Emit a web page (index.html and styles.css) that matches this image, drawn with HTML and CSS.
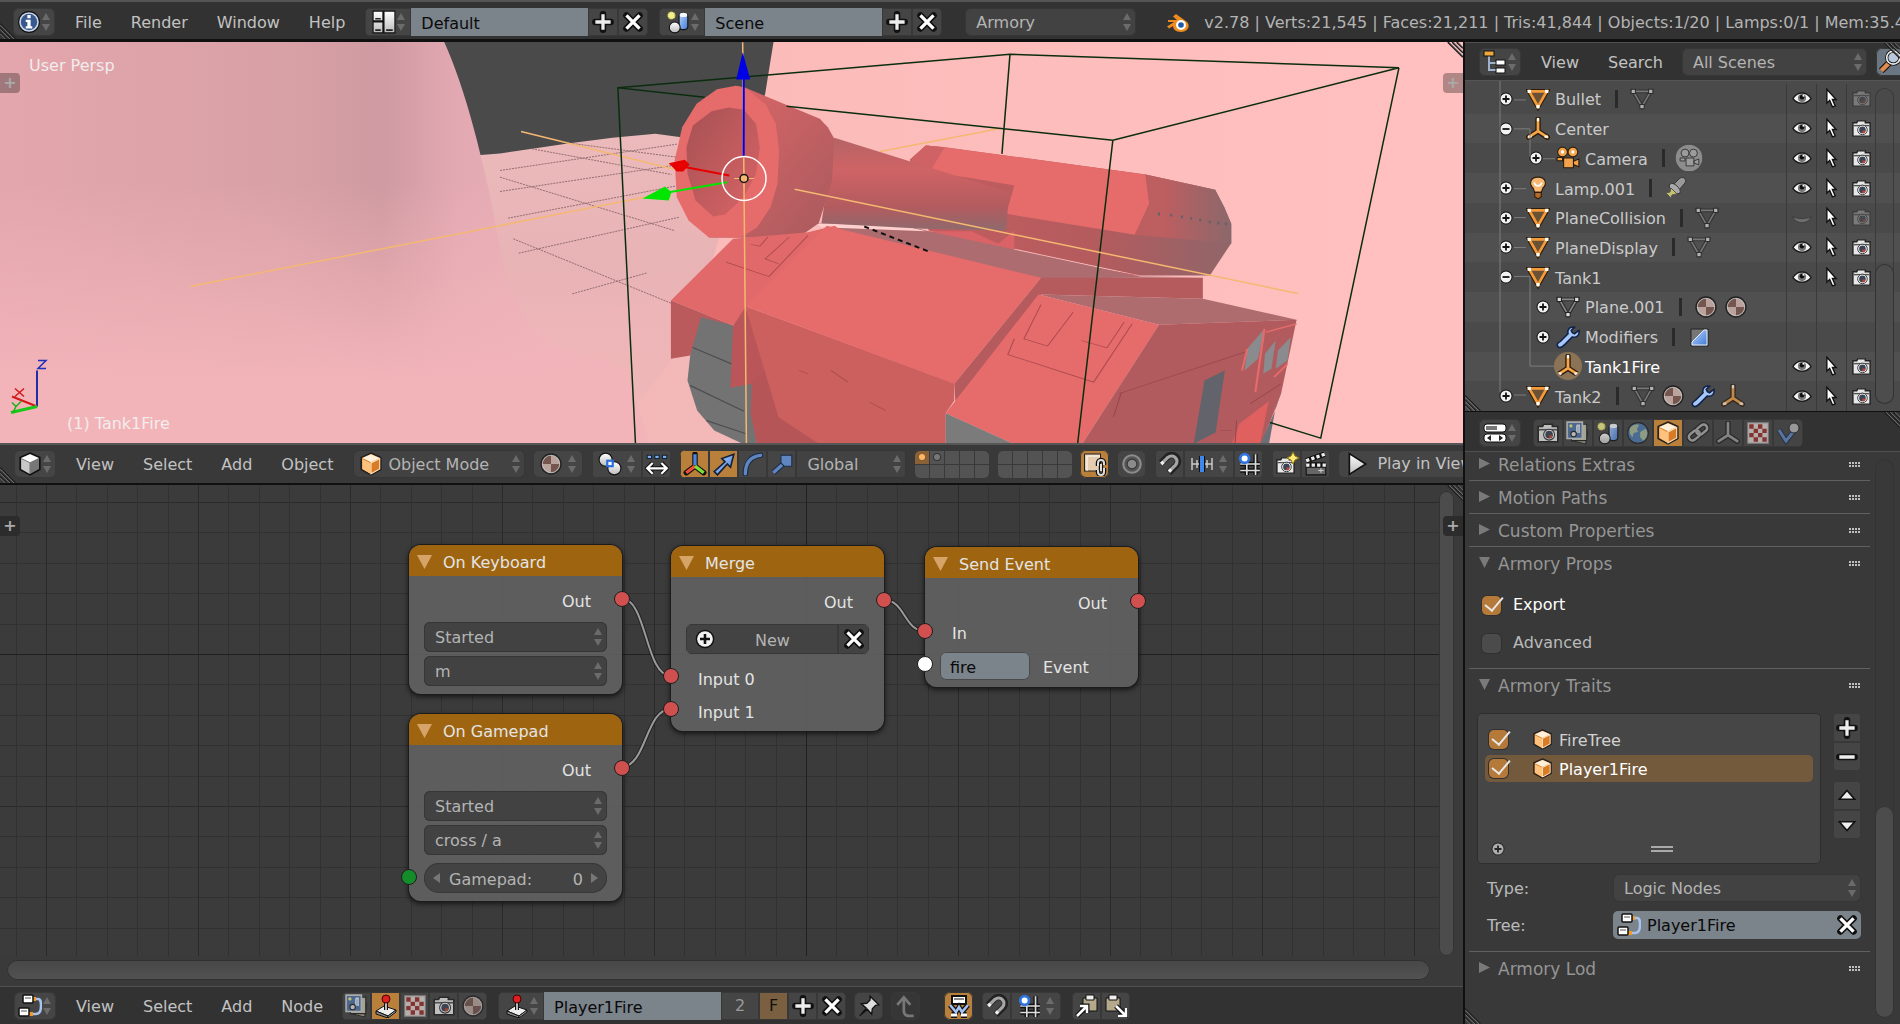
FILE: index.html
```html
<!DOCTYPE html>
<html lang="en">
<head>
<meta charset="utf-8">
<title>Blender</title>
<link rel="stylesheet" href="styles.css">
</head>
<body>
<svg class="defs" aria-hidden="true">
  <defs>
    <linearGradient id="gOrange" x1="0" y1="0" x2="0" y2="1"><stop offset="0" stop-color="#ffd9a8"/><stop offset="1" stop-color="#e8882a"/></linearGradient>
    <linearGradient id="gWhite" x1="0" y1="0" x2="0" y2="1"><stop offset="0" stop-color="#fff"/><stop offset="1" stop-color="#bbb"/></linearGradient>
    <linearGradient id="gBlue" x1="0" y1="0" x2="1" y2="1"><stop offset="0" stop-color="#bcd6ff"/><stop offset="1" stop-color="#3f7ad6"/></linearGradient>
    <symbol id="ud" viewBox="0 0 10 20"><path d="M5 1 9 8H1zM5 19 9 12H1z" fill="#6b6b6b"/></symbol>
    <symbol id="grip" viewBox="0 0 18 18"><path d="M1 0 18 17M6 0 18 12M11 0 18 7" stroke="#1c1c1c" stroke-width="2"/><path d="M2 0 18 16M7 0 18 11M12 0 18 6" stroke="#8a8a8a" stroke-width="1"/></symbol>
    <symbol id="plus" viewBox="0 0 22 22"><path d="M11 4v14M4 11h14" stroke="#111" stroke-width="6" stroke-linecap="round"/><path d="M11 4v14M4 11h14" stroke="#eee" stroke-width="3"/></symbol>
    <symbol id="minus" viewBox="0 0 22 22"><path d="M4 11h14" stroke="#111" stroke-width="6" stroke-linecap="round"/><path d="M4 11h14" stroke="#eee" stroke-width="3"/></symbol>
    <symbol id="cross" viewBox="0 0 22 22"><path d="M5 5 17 17M17 5 5 17" stroke="#111" stroke-width="6" stroke-linecap="round"/><path d="M5 5 17 17M17 5 5 17" stroke="#fff" stroke-width="3"/></symbol>
    <symbol id="info" viewBox="0 0 22 22"><circle cx="11" cy="11" r="10" fill="#111"/><circle cx="11" cy="11" r="9" fill="#c9d6ea"/><circle cx="11" cy="11" r="7.500" fill="#38588f"/><path d="M9.500 4.500h3v3h-3zM8 9h4.500v6H14v2H8v-2h1.500v-4H8z" fill="#fff"/></symbol>
    <symbol id="screen" viewBox="0 0 22 22"><path d="M1 1h9v9H1zM1 11h9v10H1zM11 1h10v20H11z" fill="url(#gWhite)" stroke="#111"/><path d="M3 8h5M3 18.500h5M13 18.500h6" stroke="#222" stroke-width="1.500"/></symbol>
    <symbol id="scene" viewBox="0 0 22 22"><rect x="12" y="3" width="8" height="15" rx="3" fill="url(#gBlue)" stroke="#111"/><ellipse cx="16" cy="4.500" rx="3.500" ry="2" fill="#f4f8ff"/><circle cx="8" cy="16" r="5" fill="url(#gWhite)" stroke="#111"/><circle cx="5" cy="5" r="3.500" fill="#f3ef8e" stroke="#8a8630" stroke-dasharray="1.500 1"/></symbol>
    <symbol id="blender" viewBox="0 0 24 22"><path d="M2 9h9L7 5.500 10 3l11 8c4 5 0 10-6 10-5 0-8-3-8-6l-4 2.500-2-2L8 11H2z" fill="#ef8a1e"/><circle cx="15" cy="14" r="5" fill="#fff"/><circle cx="15" cy="14" r="2.800" fill="#1d5aa6"/></symbol>
    <symbol id="outliner" viewBox="0 0 24 24"><path d="M6 5v15h8M6 13h8" stroke="#9fb4cc" stroke-width="2" fill="none"/><rect x="1" y="1" width="10" height="5" fill="#f0a83c" stroke="#111"/><rect x="13" y="10" width="9" height="5" fill="#fff" stroke="#111"/><rect x="13" y="18" width="9" height="5" fill="#fff" stroke="#111"/></symbol>
    <symbol id="search" viewBox="0 0 22 22"><path d="M3 19 10 12" stroke="#111" stroke-width="6"/><path d="M3 19 10 12" stroke="#e08b50" stroke-width="4"/><circle cx="14" cy="7" r="6" fill="#b9c9db" stroke="#111" stroke-width="3"/><circle cx="14" cy="7" r="6" fill="none" stroke="#eee" stroke-width="1.500"/></symbol>
    <symbol id="cubeW" viewBox="0 0 22 22"><path d="M11 1 20 5v11l-9 5-9-5V5z" fill="#777" stroke="#111" stroke-width="1.500"/><path d="M11 2 19 5.500 11 9.500 3 5.500z" fill="#fff"/><path d="M3 6.500 10.500 10v10L3 15.500z" fill="#c8c8c8"/></symbol>
    <symbol id="cubeO" viewBox="0 0 22 22"><path d="M11 1 20 5v11l-9 5-9-5V5z" fill="#d97b24" stroke="#222" stroke-width="1.500"/><path d="M11 2 19 5.500 11 9.500 3 5.500z" fill="#fff0dc"/><path d="M3 6.500 10.500 10v10L3 15.500z" fill="#ffc27d"/><path d="M19 6v9.500L11 20V10z" fill="none" stroke="#ffe1bb"/></symbol>
    <symbol id="mat" viewBox="0 0 22 22"><circle cx="11" cy="11" r="9" fill="#b9a39c" stroke="#222" stroke-width="1.500"/><path d="M11 11V3a8 8 0 0 0-8 8zM11 11v8a8 8 0 0 0 8-8z" fill="#75564f"/><circle cx="11" cy="11" r="8" fill="none" stroke="#ddd" opacity=".6"/></symbol>
    <symbol id="pivot" viewBox="0 0 22 22"><circle cx="7" cy="7" r="6" fill="url(#gWhite)" stroke="#111"/><circle cx="15" cy="15" r="6" fill="url(#gWhite)" stroke="#111"/><rect x="8.500" y="8" width="5" height="5" fill="#fff" stroke="#2a6fdb" stroke-width="2"/></symbol>
    <symbol id="manip" viewBox="0 0 22 22"><path d="M2 3h4v3H2zM9 3h4v3H9zM16 3h4v3h-4z" fill="#79aef2" stroke="#123"/><path d="M3 15h16M7 10 2 15l5 5M15 10l5 5-5 5" stroke="#111" stroke-width="4" fill="none"/><path d="M3 15h16M7 10 2 15l5 5M15 10l5 5-5 5" stroke="#fff" stroke-width="2" fill="none"/></symbol>
    <symbol id="axes" viewBox="0 0 22 22"><path d="M11 2v10M11 13 3 19M11 13l8 6" stroke="#111" stroke-width="5" stroke-linecap="round"/><path d="M11 2v10" stroke="#4a87e8" stroke-width="3"/><path d="M11 13 3 19" stroke="#f0503a" stroke-width="3"/><path d="m11 13 8 6" stroke="#7de03a" stroke-width="3"/></symbol>
    <symbol id="arrow" viewBox="0 0 22 22"><path d="M2 18 12 9 9 6l11-4-3 12-3-3L5 21z" fill="url(#gBlue)" stroke="#14213a" stroke-width="1.500"/></symbol>
    <symbol id="arc" viewBox="0 0 22 22"><path d="M4 20C4 10 9 4 18 3" stroke="#1d2c45" stroke-width="5" fill="none" stroke-linecap="round"/><path d="M4 20C4 10 9 4 18 3" stroke="#5f86bf" stroke-width="3" fill="none" stroke-linecap="round"/></symbol>
    <symbol id="scale" viewBox="0 0 22 22"><path d="M3 19 12 11" stroke="#1d2c45" stroke-width="5"/><path d="M3 19 12 11" stroke="#5f86bf" stroke-width="3"/><path d="M10 3h10v10h-7l-3-3z" fill="#5f86bf" stroke="#1d2c45"/></symbol>
    <symbol id="lock" viewBox="0 0 24 24"><rect x="1.500" y="2" width="16" height="17" fill="#e6cdb0" stroke="#222"/><path d="M4 19V4h13" stroke="#fff" fill="none"/><path d="M15 14v-3a3 3 0 0 1 6 0v2M21 16v4a3 3 0 0 1-6 0v-2M18 12v7" stroke="#111" stroke-width="4.500" fill="none"/><path d="M15 14v-3a3 3 0 0 1 6 0v2M21 16v4a3 3 0 0 1-6 0v-2M18 12v7" stroke="#ddd" stroke-width="2" fill="none"/></symbol>
    <symbol id="prop" viewBox="0 0 22 22"><circle cx="11" cy="11" r="8" fill="#555" stroke="#8a8a8a" stroke-width="2"/><circle cx="11" cy="11" r="4.500" fill="#8a8a8a" stroke="#333"/></symbol>
    <symbol id="magnet" viewBox="0 0 22 22"><path d="M3 10 9 4c6-4 12 3 8 8l-7 7" stroke="#222" stroke-width="6" fill="none"/><path d="M3 11 9 5c5-4 11 2 7 7l-6 6" stroke="#a5a5a5" stroke-width="3" fill="none"/><path d="m3 11 2-2M10 18l2-2" stroke="#eee" stroke-width="3"/></symbol>
    <symbol id="inc" viewBox="0 0 24 22"><path d="M2 5v12M7 7v8M17 7v8M22 5v12M2 11h20" stroke="#c8c8c8" stroke-width="1.500"/><path d="M12 3v16" stroke="#111" stroke-width="6"/><path d="M12 3v16" stroke="#3f86ee" stroke-width="4"/></symbol>
    <symbol id="sgrid" viewBox="0 0 22 22"><path d="M9 8v13M17 2v19M3 11h18M3 17h18" stroke="#111" stroke-width="4"/><path d="M9 8v13M17 2v19M3 11h18M3 17h18" stroke="#ddd" stroke-width="1.500"/><circle cx="7" cy="6" r="4" fill="#fff" stroke="#2f74e0" stroke-width="2.500"/></symbol>
    <symbol id="photo" viewBox="0 0 22 22"><path d="M2 5h4l1-2h8v2h5v14H2z" fill="#e8e8e8" stroke="#222" stroke-width="1.500"/><path d="M2.500 8h17" stroke="#555" stroke-width="1.500"/><circle cx="12" cy="12.500" r="5" fill="#fff" stroke="#333"/><circle cx="12" cy="12.500" r="3.500" fill="#3a4457"/><path d="M12 13h3a3 3 0 0 1-3 3z" fill="#c8402c"/></symbol>
    <symbol id="photoStar" viewBox="0 0 24 24"><use href="#photo" y="3" width="21" height="21"/><path d="m18 0 2 4 4 2-4 2-2 4-2-4-4-2 4-2z" fill="#ffe873" stroke="#8f7a10"/></symbol>
    <symbol id="clapper" viewBox="0 0 22 22"><path d="M2 12h18v9H2z" fill="#666" stroke="#111"/><path d="M2 8 19 2M2 12h18" stroke="#111" stroke-width="5"/><path d="M2 8 19 2" stroke="#eee" stroke-width="3" stroke-dasharray="3 2"/><path d="M2 12h18" stroke="#eee" stroke-width="3" stroke-dasharray="3 2"/><path d="M13 17h5M15.500 15v4" stroke="#ccc"/></symbol>
    <symbol id="play" viewBox="0 0 22 22"><path d="M4 1.500 19 11 4 20.500z" fill="url(#gWhite)" stroke="#111" stroke-width="1.500"/></symbol>
    <symbol id="meshO" viewBox="0 0 22 22"><path d="M3 4h16l-8 14z" stroke="#2a1c0c" stroke-width="4.500" fill="none"/><path d="M3 4h16l-8 14z" stroke="#f39a3a" stroke-width="2.500" fill="#6a5034"/><path d="M1.500 2.500h3v3h-3zM17.500 2.500h3v3h-3zM9.500 16.500h3v3h-3z" fill="#fff"/></symbol>
    <symbol id="meshG" viewBox="0 0 22 22"><path d="M3 4h16l-8 14z" stroke="#2a2a2a" stroke-width="3.500" fill="none"/><path d="M3 4h16l-8 14z" stroke="#8a8a8a" stroke-width="1.500" fill="none"/><path d="M1 2h4v4H1zM17 2h4v4h-4zM9 16h4v4H9z" fill="#ddd" stroke="#222"/></symbol>
    <symbol id="empty" viewBox="0 0 22 22"><path d="M11 2v11M11 13 2.500 18.500M11 13l8.500 5.500" stroke="#2a1c0c" stroke-width="5" stroke-linecap="round"/><path d="M11 2v11M11 13 2.500 18.500M11 13l8.500 5.500" stroke="#f7a548" stroke-width="2.500" stroke-linecap="round"/><path d="M10 1h2v3h-2zM2 17h3v2H2zM17 17h3v2h-3z" fill="#fff"/></symbol>
    <symbol id="emptyG" viewBox="0 0 22 22"><path d="M11 2v11M11 13 2.500 18.500M11 13l8.500 5.500" stroke="#222" stroke-width="5" stroke-linecap="round"/><path d="M11 2v11M11 13 2.500 18.500M11 13l8.500 5.500" stroke="#999" stroke-width="2.500" stroke-linecap="round"/></symbol>
    <symbol id="movie" viewBox="0 0 22 22"><g fill="#f3a34c" stroke="#2a1c0c"><circle cx="6" cy="5.500" r="4.500"/><circle cx="15.500" cy="5.500" r="4.500"/><path d="M1 10.500h5v3H1zM7 11h9v9H7zM16 14l5-2v7l-5-2z"/></g><circle cx="6" cy="5.500" r="1.500" fill="#fff"/><circle cx="15.500" cy="5.500" r="1.500" fill="#fff"/></symbol>
    <symbol id="movieG" viewBox="0 0 28 28"><circle cx="14" cy="14" r="13.500" fill="#8c8c8c"/><g fill="#9c9c9c" stroke="#3a3a3a"><circle cx="10" cy="9" r="4"/><circle cx="18.500" cy="9" r="4"/><path d="M5 14h5v3H5zM11 14h8v8h-8zM19 17l5-2v6l-5-2z"/></g></symbol>
    <symbol id="bulb" viewBox="0 0 22 22"><path d="M11 1c8 0 8 7 4.500 10L14 15H8l-1.500-4C3 8 3 1 11 1z" fill="#f8b673" stroke="#2a1c0c"/><path d="M7.500 6c1 4 6 4 7 0" stroke="#fff" stroke-width="1.500" fill="none"/><path d="M8 15h6v4l-3 2-3-2z" fill="#b56a27" stroke="#2a1c0c"/></symbol>
    <symbol id="sun" viewBox="0 0 24 24"><path d="m9 9 7-7c4-2 7 2 5 5l-6 7z" fill="#999" stroke="#333"/><path d="M6 8c3-3 12 5 10 9l-3 1-8-7z" fill="#aaa" stroke="#333"/><path d="m7 12 6 6-5 1-1 3-5-5 4-1z" fill="#c4c26a" stroke="#555"/></symbol>
    <symbol id="wrench" viewBox="0 0 22 22"><path d="M2 20c-2-2 0-4 2-5l7-7c-1-4 2-7 6-6l-3 3 1 2 2 1 4-3c1 4-2 7-6 6l-7 7c-2 2-4 4-6 2z" fill="#a9c8fa" stroke="#12244a" stroke-width="1.500"/></symbol>
    <symbol id="bevel" viewBox="0 0 24 24"><path d="M4 4h17v17H4z" fill="#777" stroke="#222"/><path d="M5 20V17L17 5h3v15z" fill="url(#gBlue)" stroke="#e6efff" stroke-width="1"/></symbol>
    <symbol id="eye" viewBox="0 0 22 16"><path d="M1 8c5-8 15-8 20 0-5 7-15 7-20 0z" fill="#f5f5f5" stroke="#1c1c1c" stroke-width="1.500"/><circle cx="11" cy="7.500" r="4.500" fill="#777"/><circle cx="11" cy="6.500" r="2.500" fill="#111"/><circle cx="12.500" cy="5" r="1" fill="#fff"/></symbol>
    <symbol id="eyeOff" viewBox="0 0 22 16"><path d="M1 7c6 3 14 3 20 0-3 9-17 9-20 0z" fill="#6e6e6e" stroke="#3c3c3c"/></symbol>
    <symbol id="cursor" viewBox="0 0 14 22"><path d="M2 1v15l3-3 3 7 3-1-3-7h4z" fill="#fff" stroke="#111" stroke-width="1.500"/></symbol>
    <symbol id="expand" viewBox="0 0 14 14"><circle cx="7" cy="7" r="6.500" fill="#111"/><circle cx="7" cy="7" r="5.500" fill="#f2f2f2"/><path d="M7 3.500v7M3.500 7h7" stroke="#111" stroke-width="1.800"/></symbol>
    <symbol id="collapse" viewBox="0 0 14 14"><circle cx="7" cy="7" r="6.500" fill="#111"/><circle cx="7" cy="7" r="5.500" fill="#f2f2f2"/><path d="M3.500 7h7" stroke="#111" stroke-width="1.800"/></symbol>
    <symbol id="props" viewBox="0 0 24 22"><rect x="1" y="2" width="22" height="8" rx="3" fill="#fff" stroke="#111"/><rect x="3" y="4" width="11" height="4" fill="#777"/><rect x="1" y="12" width="22" height="8" rx="3" fill="#fff" stroke="#111"/><path d="m4 16 4-3v6zM20 16l-4-3v6z" fill="#222"/></symbol>
    <symbol id="layers" viewBox="0 0 22 22"><path d="m8 6 12 3-2 12L5 18z" fill="#aaa48c" stroke="#222"/><path d="M5 3h14v15H5z" fill="#c5c5b0" stroke="#222"/><path d="M1 1h14v15H1z" fill="#4f74a8" stroke="#ccc" stroke-width="1.500"/><path d="M10 4v7M10 4h2v7" stroke="#dfe9f7" stroke-width="1.500" fill="none"/><circle cx="7" cy="12" r="2.500" fill="#ddd" stroke="#222"/><circle cx="4.500" cy="4.500" r="1.500" fill="#eeea80"/></symbol>
    <symbol id="world" viewBox="0 0 22 22"><circle cx="11" cy="11" r="9.500" fill="#4c78ad" stroke="#222"/><path d="M4 6c3-4 8-3 8-2l-2 3 1 3-4 1-1 4c-3-3-3-6-2-9zM13 10l5-3c3 4 1 9-2 11l-3-3z" fill="#a9b894"/></symbol>
    <symbol id="chain" viewBox="0 0 24 22"><g fill="none" stroke="#222" stroke-width="5"><rect x="2" y="10" width="12" height="7" rx="3.500" transform="rotate(-38 8 13)"/><rect x="10" y="4" width="12" height="7" rx="3.500" transform="rotate(-38 16 8)"/></g><g fill="none" stroke="#aaa" stroke-width="2.500"><rect x="2" y="10" width="12" height="7" rx="3.500" transform="rotate(-38 8 13)"/><rect x="10" y="4" width="12" height="7" rx="3.500" transform="rotate(-38 16 8)"/></g></symbol>
    <symbol id="checker" viewBox="0 0 22 22"><path d="M1.500 1.500h19v19h-19z" fill="#ddd4d0" stroke="#888"/><path d="M3 3h4v4H3zM11 3h4v4h-4zM7 7h4v4H7zM15 7h4v4h-4zM3 11h4v4H3zM11 11h4v4h-4zM7 15h4v4H7zM15 15h4v4h-4z" fill="#9a2e2e"/></symbol>
    <symbol id="physics" viewBox="0 0 24 22"><path d="m3 8 7 11 8-10" stroke="#1d2c45" stroke-width="5" fill="none"/><path d="m3 8 7 11 8-10" stroke="#5f86bf" stroke-width="3" fill="none"/><circle cx="18" cy="6" r="5" fill="#b5b5b5" stroke="#222"/></symbol>
    <symbol id="nodes" viewBox="0 0 24 24"><path d="M15 5h5c3 0 3 3 3 7 0 6-2 8-5 8h-6" stroke="#a7c4ee" stroke-width="2.500" fill="none"/><path d="M14 3h4v4h-4zM11 18h4v4h-4z" fill="#f09a2a"/><rect x="5" y="1" width="10" height="8" rx="1" fill="#fff" stroke="#111" stroke-width="1.500"/><rect x="1" y="14" width="10" height="8" rx="1" fill="#fff" stroke="#111" stroke-width="1.500"/><path d="M7 4h6M3 17h6" stroke="#555"/></symbol>
    <symbol id="joy" viewBox="0 0 24 24"><path d="m2 17 8-5 12 4-8 6z" fill="#eee" stroke="#111"/><path d="m2 17 12 5v2L2 20z" fill="#888" stroke="#111"/><path d="m14 22 8-6v2l-8 6z" fill="#aaa" stroke="#111"/><path d="M12 16V7" stroke="#111" stroke-width="4"/><path d="M12 16V7" stroke="#bbb" stroke-width="2"/><circle cx="12" cy="5" r="4" fill="#e02020" stroke="#400"/></symbol>
    <symbol id="pin" viewBox="0 0 22 22"><path d="m12 2 8 8-3 .5-3 3-.5 5-4-4.500-7 6 6-7-4.500-4 5-.5 3-3z" fill="#ddd" stroke="#111" stroke-width="1.200"/></symbol>
    <symbol id="up" viewBox="0 0 22 22"><path d="M18 20h-5c-3 0-4-2-4-5V4M3 10l6-7 6 7" stroke="#777" stroke-width="2.500" fill="none"/></symbol>
    <symbol id="backdrop" viewBox="0 0 24 24"><path d="M5 2h14v8H5z" fill="#fff" stroke="#111" stroke-width="2"/><path d="M7 5h10" stroke="#888" stroke-width="2"/><path d="m3 11 6 7 3-5 3 5 6-7M4 22h6M14 22h6M7 18v4M17 18v4" stroke="#111" stroke-width="5" fill="none"/><path d="m3 11 6 7 3-5 3 5 6-7" stroke="#a5c4f5" stroke-width="2.500" fill="none"/><path d="M4 21h6M14 21h6" stroke="#fff" stroke-width="3"/></symbol>
    <symbol id="copy" viewBox="0 0 24 24"><path d="M8 4h14v13H8z" fill="#b5a98c" stroke="#111"/><path d="M11 1h8v5h-8z" fill="#eee" stroke="#111"/><path d="M2 22 11 13M5 12h7v7" stroke="#111" stroke-width="5" fill="none"/><path d="M2 22 11 13M5 12h7v7" stroke="#fff" stroke-width="2.500" fill="none"/></symbol>
    <symbol id="paste" viewBox="0 0 24 24"><path d="M2 4h14v13H2z" fill="#b5a98c" stroke="#111"/><path d="M5 1h8v5H5z" fill="#eee" stroke="#111"/><path d="m12 12 9 9M22 14v8h-8" stroke="#111" stroke-width="5" fill="none"/><path d="m12 12 9 9M22 14v8h-8" stroke="#fff" stroke-width="2.500" fill="none"/></symbol>
  </defs>
</svg>

<header class="bar bar-top">
  <svg class="corner corner-bl"><use href="#grip"/></svg>
  <button class="btn pick" aria-label="Editor type"><svg class="ic"><use href="#info"/></svg><svg class="ud"><use href="#ud"/></svg></button>
  <nav class="menus"><button>File</button><button>Render</button><button>Window</button><button>Help</button></nav>
  <div class="group">
    <button class="btn pick" aria-label="Browse screens"><svg class="ic"><use href="#screen"/></svg><svg class="ud"><use href="#ud"/></svg></button>
    <input class="field" value="Default" aria-label="Screen">
    <button class="btn" aria-label="Add screen"><svg class="ic"><use href="#plus"/></svg></button>
    <button class="btn" aria-label="Delete screen"><svg class="ic"><use href="#cross"/></svg></button>
  </div>
  <div class="group">
    <button class="btn pick" aria-label="Browse scenes"><svg class="ic"><use href="#scene"/></svg><svg class="ud"><use href="#ud"/></svg></button>
    <input class="field" value="Scene" aria-label="Scene">
    <button class="btn" aria-label="Add scene"><svg class="ic"><use href="#plus"/></svg></button>
    <button class="btn" aria-label="Delete scene"><svg class="ic"><use href="#cross"/></svg></button>
  </div>
  <span class="sel sel-engine"><select aria-label="Render engine"><option>Armory</option></select><svg class="ud"><use href="#ud"/></svg></span>
  <svg class="ic logo"><use href="#blender"/></svg>
  <span class="status">v2.78 | Verts:21,545 | Faces:21,211 | Tris:41,844 | Objects:1/20 | Lamps:0/1 | Mem:35.49M</span>
</header>

<main class="work">
  <div class="left">
    <section class="view3d" aria-label="3D view">
      <svg class="scene" viewBox="0 41 1463 402" preserveAspectRatio="xMidYMid slice">
        <defs>
          <linearGradient id="hill" x1="0" x2="1" y1="0" y2="0"><stop offset="0" stop-color="#e3a6ac"/><stop offset=".45" stop-color="#d8a1a6"/><stop offset=".6" stop-color="#cf9aa1"/><stop offset=".72" stop-color="#e3a9b3"/><stop offset="1" stop-color="#efb6bb"/></linearGradient>
          <linearGradient id="hillDown" x1="0" x2="0" y1="0" y2="1"><stop offset=".35" stop-color="#f2b4b9" stop-opacity="0"/><stop offset=".85" stop-color="#f2b4b9"/></linearGradient>
          <linearGradient id="ground" x1="0" x2="0" y1="0" y2="1"><stop offset="0" stop-color="#ecbabb"/><stop offset=".4" stop-color="#e8b3b5"/><stop offset="1" stop-color="#f6b9bc"/></linearGradient>
          <linearGradient id="wall" x1="0" x2="1" y1="0" y2="0"><stop offset="0" stop-color="#f9bab8"/><stop offset="1" stop-color="#ffc0bf"/></linearGradient>
          <linearGradient id="bore" x1="0" x2="1" y1="0" y2="1"><stop offset="0" stop-color="#a65154"/><stop offset="1" stop-color="#d96466"/></linearGradient>
          <linearGradient id="flange" x1="0" x2="1" y1="0" y2="1"><stop offset="0" stop-color="#df6768"/><stop offset="1" stop-color="#a85a5e"/></linearGradient>
          <linearGradient id="barrel" x1="0" x2="0" y1="0" y2="1"><stop offset="0" stop-color="#b56466"/><stop offset=".35" stop-color="#cf6365"/><stop offset=".75" stop-color="#b25b5e"/><stop offset="1" stop-color="#8e6a6d"/></linearGradient>
          <linearGradient id="turret" x1="0" x2="1" y1="0" y2="0"><stop offset="0" stop-color="#c45d5f"/><stop offset=".6" stop-color="#b35b5e"/><stop offset="1" stop-color="#8f6669"/></linearGradient>
          <linearGradient id="rim" x1="0" x2="1" y1="0" y2="0"><stop offset=".3" stop-color="#bd5e60"/><stop offset="1" stop-color="#8b686b"/></linearGradient>
        </defs>
        <rect y="41" width="1463" height="402" fill="#4a4a4a"/>
        <g transform="translate(500 40) scale(.53571 .33333)">
          <path d="M-90 350 0 339 130 308 210 292 290 280 345 292 560 560V1230H-940V900z" fill="url(#ground)"/>
          <path d="M511 0H1800V1230H190L320 960 400 640 495 160z" fill="url(#wall)"/>
          <path d="M130 850Q210 790 330 780L480 1230H200L250 1080z" fill="#eeb5b7" opacity=".6"/>
          <path d="M0 390 330 311M0 453 335 372M60 325 320 402M0 410 325 570M15 533 330 436M35 638 335 530M135 760 275 697M25 595 330 795M130 308 330 350" fill="none" stroke="#7d5c60" vector-effect="non-scaling-stroke" stroke-dasharray="2 1" opacity=".8"/>
        </g>
        <path d="M0 41H444C466 90 480 150 490 195C500 250 508 300 530 325C560 360 600 352 626 370L636 443H0z" fill="url(#hill)"/>
        <path d="M0 41H444C466 90 480 150 490 195C500 250 508 300 530 325C560 360 600 352 626 370L650 443H0z" fill="url(#hillDown)"/>
        <path d="M190 286 740 178M521 131 740 185M880 151 1000 128" stroke="#f5b872" stroke-width="1.500"/>
        <g transform="translate(500 40) scale(.53571 .33333)">
          <path d="M372 820 435 855V1040L470 1020 480 1215H460L400 1170 368 1110 350 1020 358 900z" fill="#737373"/>
          <path d="M358 920 435 972M355 1035 455 1112M385 1140 460 1180" stroke="#4c4c50" stroke-width="3" fill="none"/>
          <path d="M795 315 830 320 1205 402 1335 448 1352 500 1365 550V608L1325 705H1195L800 570 765 358z" fill="url(#turret)"/>
          <path d="M795 315 830 320 1205 402 1212 490 1185 583 945 520 960 435 876 412 800 395 765 358z" fill="#e66b6b"/>
          <path d="M795 315 830 320 800 400 765 358z" fill="#cf6264"/>
          <path d="M1205 402 1335 448 1352 500 1365 550V608L1185 583 1212 490z" fill="url(#rim)"/>
          <path d="M1230 517v8M1253 520v8M1273 525v8M1290 530v8M1307 535v8M1325 540v8M1341 544v8M1355 546v8" stroke="#62636b" stroke-width="4"/>
          <path d="M795 572 880 572 930 610 960 570V640L1195 705 1010 712z" fill="#d96366"/>
          <path d="M590 548 750 552 800 572 1195 708 1312 710 1010 714 690 620z" fill="#ad6d70"/>
          <path d="M590 549 750 554 795 572 600 560z" fill="#ffd0ce"/>
          <path d="M624 292 950 455 945 570 790 565 600 548z" fill="url(#barrel)"/>
          <path d="M440 136 458 142 597 235 612 260 624 295 620 420 595 548 565 582 470 592 390 591z" fill="url(#flange)"/>
          <path d="M405 146 440 136 458 142 495 190 515 250 521 330 518 430 505 500 480 560 450 591H390L352 540 330 470 326 360 340 260 367 190z" fill="#e66b6b"/>
          <path d="M395 212 427 201 455 208 478 250 485 320 478 400 455 470 420 522 398 528 365 480 350 400 348 320 360 255z" fill="url(#bore)"/>
          <path d="M435 595 575 575 625 556 660 600 460 800 435 855 319 780z" fill="#e2696a"/>
          <path d="M319 780 435 855 375 830 355 945 319 955z" fill="#ba5a5d"/>
          <path d="M435 855 458 800 520 1015 430 1042z" fill="#ba5659"/>
          <path d="M470 1025 500 980 600 1215H480L468 1120z" fill="#b65558"/>
          <path d="M458 797 848 1028V1080L832 1118V1215H600L520 1130z" fill="#cb605f"/>
          <path d="M610 556 1010 712 848 1030 458 797z" fill="#e66b6b"/>
          <path d="M1010 712H1312V775L1010 762 850 1082 848 1030z" fill="#b55a5d"/>
          <path d="M1005 762 1312 775 1487 838 1230 853z" fill="#af6c6e"/>
          <path d="M1005 762 1230 853 1085 1215H965L832 1118z" fill="#e66b6b"/>
          <path d="M832 1118 965 1215H832z" fill="#7b7b7b"/>
          <path d="M1230 853 1487 838 1458 1060 1420 1215H1085z" fill="#b15b5e"/>
          <path d="M1458 1055 1447 1110 1418 1215H1435L1448 1100z" fill="#6d6f76"/>
          <path d="M1435 1082 1380 1150 1365 1215H1418z" fill="#e0605f"/>
          <path d="M1353 990 1315 1020 1295 1210 1336 1175z" fill="#62636b"/>
          <path d="M1427 865 1395 925 1390 990 1415 955zM1448 900 1428 940 1425 1000 1440 985zM1476 890 1452 930 1448 985 1470 960z" fill="#8a8b8e"/>
          <path d="M1427 865 1410 1055M1487 850 1430 875M1470 970 1445 1010M1395 925 1385 990" stroke="#e66b6b" stroke-width="4" fill="none"/>
          <path d="M1155 1060 1390 935M1160 1055 1145 1130M1400 1090 1458 1030M1345 1170 1365 1170M1375 1140 1372 1215" stroke="#96484b" stroke-width="2" fill="none"/>
          <path d="M1010 792 978 895 1022 917 1070 815M1165 845 1133 922 1085 900M1180 850 1108 1025 948 942 960 895M575 585 502 708 422 665M540 590 495 655 520 670M500 590 485 617 468 612" stroke="#a84a4d" stroke-width="2" fill="none"/>
          <path d="M558 990 575 1000M618 990 650 1025M690 1085 720 1110" stroke="#a84a4d" stroke-width="2"/>
          <path d="M382 170 220 142 253 1213M220 142 952 41 1678 82 1144 299 535 197M952 41 937 340M1144 299 1078 1213M1678 82 1532 1193 1437 1146" stroke="#0b2d0f" stroke-width="1.500" fill="none" vector-effect="non-scaling-stroke"/>
          <path d="M680 558 805 636" stroke="#111" stroke-width="2" stroke-dasharray="5 4" vector-effect="non-scaling-stroke"/>
          <path d="M550 446 1490 759M453 5 460 1213" stroke="#f5b872" stroke-width="1.500" vector-effect="non-scaling-stroke"/>
          <path d="M455 350V115" stroke="#0000e6" stroke-width="2" vector-effect="non-scaling-stroke"/>
          <path d="M453 35 467 117H441z" fill="#0000e6"/>
          <path d="M428 405 340 378" stroke="#e60000" stroke-width="2" vector-effect="non-scaling-stroke"/>
          <path d="M315 368 345 358 354 372 342 393 330 393z" fill="#e60000"/>
          <path d="M424 425 315 455" stroke="#00e600" stroke-width="2" vector-effect="non-scaling-stroke"/>
          <path d="M266 474 308 438 320 455 315 480z" fill="#00e600"/>
        </g>
        <circle cx="744" cy="178" r="22" fill="none" stroke="#fff" stroke-width="1.500"/>
        <path d="M734 178h20M744 170v16" stroke="#f5b872"/>
        <circle cx="744" cy="178" r="4" fill="#f5b872" stroke="#111" stroke-width="1.500"/>
        <path d="M37 406V370" stroke="#1e2ea8" stroke-width="2"/><path d="M37 406 12 396" stroke="#d01818" stroke-width="2"/><path d="M37 406 11 412" stroke="#18c818" stroke-width="3"/>
        <path d="M38 360h8l-8 8h8" stroke="#2030b8" stroke-width="1.500" fill="none"/><path d="m15 388 9 8m0-8-9 8" stroke="#d01818" stroke-width="1.500"/><path d="m12 402 4 4 5-5m-5 5-3 6" stroke="#18b018" stroke-width="1.500" fill="none"/>
      </svg>
      <div class="overlay">
        <span>User Persp</span>
        <span class="objname">(1) Tank1Fire</span>
      </div>
      <button class="tab tab-l" aria-label="Open tool shelf">+</button>
      <button class="tab tab-r" aria-label="Open sidebar">+</button>
      <svg class="corner corner-tr"><use href="#grip"/></svg>
    </section>

    <header class="bar bar-3d">
      <svg class="corner corner-bl"><use href="#grip"/></svg>
      <button class="btn pick" aria-label="Editor type"><svg class="ic"><use href="#cubeW"/></svg><svg class="ud"><use href="#ud"/></svg></button>
      <nav class="menus"><button>View</button><button>Select</button><button>Add</button><button>Object</button></nav>
      <span class="sel sel-mode"><svg class="ic"><use href="#cubeO"/></svg><select aria-label="Mode"><option>Object Mode</option></select><svg class="ud"><use href="#ud"/></svg></span>
      <button class="btn pick wide lone" aria-label="Shading"><svg class="ic"><use href="#mat"/></svg><svg class="ud"><use href="#ud"/></svg></button>
      <div class="group">
        <button class="btn pick wide" aria-label="Pivot"><svg class="ic"><use href="#pivot"/></svg><svg class="ud"><use href="#ud"/></svg></button>
        <button class="btn" aria-label="Manipulate centers"><svg class="ic"><use href="#manip"/></svg></button>
      </div>
      <div class="group">
        <button class="btn on" aria-label="Manipulator"><svg class="ic"><use href="#axes"/></svg></button>
        <button class="btn on" aria-label="Translate"><svg class="ic"><use href="#arrow"/></svg></button>
        <button class="btn" aria-label="Rotate"><svg class="ic"><use href="#arc"/></svg></button>
        <button class="btn" aria-label="Scale"><svg class="ic"><use href="#scale"/></svg></button>
        <span class="sel sel-orient"><select aria-label="Orientation"><option>Global</option></select><svg class="ud"><use href="#ud"/></svg></span>
      </div>
      <div class="lay"><i class="active"></i><i class="used"></i><i></i><i></i><i></i><i></i><i></i><i></i><i></i><i></i></div>
      <div class="lay"><i></i><i></i><i></i><i></i><i></i><i></i><i></i><i></i><i></i><i></i></div>
      <button class="btn on lone" aria-label="Lock to scene"><svg class="ic"><use href="#lock"/></svg></button>
      <button class="btn lone" aria-label="Proportional editing"><svg class="ic"><use href="#prop"/></svg></button>
      <div class="group">
        <button class="btn" aria-label="Snap"><svg class="ic"><use href="#magnet"/></svg></button>
        <button class="btn pick wide" aria-label="Snap element"><svg class="ic"><use href="#inc"/></svg><svg class="ud"><use href="#ud"/></svg></button>
        <button class="btn" aria-label="Absolute grid snap"><svg class="ic"><use href="#sgrid"/></svg></button>
      </div>
      <div class="group">
        <button class="btn" aria-label="Render image"><svg class="ic"><use href="#photoStar"/></svg></button>
        <button class="btn" aria-label="Render animation"><svg class="ic"><use href="#clapper"/></svg></button>
      </div>
      <button class="btn play"><svg class="ic"><use href="#play"/></svg>Play in Viewport</button>
    </header>

    <section class="nodes" aria-label="Node editor">
      <div class="canvas">
        <svg class="links"><path d="M621 113C647 113 645 191 671 191M621 282C647 282 645 224 671 224M884 115C905 115 904 146 925 146" fill="none" stroke="#222" stroke-width="4"/><path d="M621 113C647 113 645 191 671 191M621 282C647 282 645 224 671 224M884 115C905 115 904 146 925 146" fill="none" stroke="#9a9a9a" stroke-width="2"/></svg>
        <article class="node n-key">
          <h2>On Keyboard</h2>
          <div class="nbody">
            <p class="out">Out</p>
            <span class="sel"><select aria-label="State"><option>Started</option></select><svg class="ud"><use href="#ud"/></svg></span>
            <span class="sel"><select aria-label="Key"><option>m</option></select><svg class="ud"><use href="#ud"/></svg></span>
          </div>
          <i class="sock s-out"></i>
        </article>
        <article class="node n-pad">
          <h2>On Gamepad</h2>
          <div class="nbody">
            <p class="out">Out</p>
            <span class="sel"><select aria-label="State"><option>Started</option></select><svg class="ud"><use href="#ud"/></svg></span>
            <span class="sel"><select aria-label="Button"><option>cross / a</option></select><svg class="ud"><use href="#ud"/></svg></span>
            <label class="num"><span>Gamepad:</span><input value="0"></label>
          </div>
          <i class="sock s-out"></i><i class="sock s-pad"></i>
        </article>
        <article class="node n-merge">
          <h2>Merge</h2>
          <div class="nbody">
            <p class="out">Out</p>
            <div class="group new"><button class="btn grow"><svg class="add"><use href="#expand"/></svg><span>New</span></button><button class="btn" aria-label="Remove input"><svg class="ic"><use href="#cross"/></svg></button></div>
            <p class="in">Input 0</p>
            <p class="in">Input 1</p>
          </div>
          <i class="sock s-out"></i><i class="sock s-in0"></i><i class="sock s-in1"></i>
        </article>
        <article class="node n-send">
          <h2>Send Event</h2>
          <div class="nbody">
            <p class="out">Out</p>
            <p class="in short">In</p>
            <label class="event"><input class="field" value="fire"><span>Event</span></label>
          </div>
          <i class="sock s-out"></i><i class="sock s-in"></i><i class="sock s-event"></i>
        </article>
        <button class="tab tab-l" aria-label="Open node tools">+</button>
      </div>
      <div class="vtrack"><div class="vthumb"></div></div>
      <div class="htrack"></div>
      <button class="tab tab-r" aria-label="Open node sidebar">+</button>
      <svg class="corner corner-tr"><use href="#grip"/></svg>
    </section>

    <header class="bar bar-node">
      <button class="btn pick" aria-label="Editor type"><svg class="ic"><use href="#nodes"/></svg><svg class="ud"><use href="#ud"/></svg></button>
      <nav class="menus"><button>View</button><button>Select</button><button>Add</button><button>Node</button></nav>
      <div class="group">
        <button class="btn dim" aria-label="Compositing"><svg class="ic"><use href="#layers"/></svg></button>
        <button class="btn on" aria-label="Logic"><svg class="ic"><use href="#joy"/></svg></button>
        <button class="btn dim" aria-label="Texture"><svg class="ic"><use href="#checker"/></svg></button>
        <button class="btn dim" aria-label="Render"><svg class="ic"><use href="#photo"/></svg></button>
        <button class="btn dim" aria-label="Material"><svg class="ic"><use href="#mat"/></svg></button>
      </div>
      <div class="group">
        <button class="btn pick" aria-label="Browse trees"><svg class="ic"><use href="#joy"/></svg><svg class="ud"><use href="#ud"/></svg></button>
        <input class="field" value="Player1Fire" aria-label="Node tree">
        <button class="btn users">2</button>
        <button class="btn fake">F</button>
        <button class="btn" aria-label="New tree"><svg class="ic"><use href="#plus"/></svg></button>
        <button class="btn" aria-label="Unlink tree"><svg class="ic"><use href="#cross"/></svg></button>
      </div>
      <button class="btn lone" aria-label="Pin"><svg class="ic"><use href="#pin"/></svg></button>
      <button class="btn lone off" aria-label="Parent tree"><svg class="ic"><use href="#up"/></svg></button>
      <button class="btn on lone auto" aria-label="Auto offset"><svg class="ic"><use href="#backdrop"/></svg></button>
      <div class="group">
        <button class="btn" aria-label="Snap"><svg class="ic"><use href="#magnet"/></svg></button>
        <button class="btn pick wide" aria-label="Snap element"><svg class="ic"><use href="#sgrid"/></svg><svg class="ud"><use href="#ud"/></svg></button>
      </div>
      <div class="group">
        <button class="btn" aria-label="Copy"><svg class="ic"><use href="#copy"/></svg></button>
        <button class="btn" aria-label="Paste"><svg class="ic"><use href="#paste"/></svg></button>
      </div>
    </header>
  </div>

  <aside class="right">
    <header class="bar bar-out">
      <button class="btn pick" aria-label="Editor type"><svg class="ic"><use href="#outliner"/></svg><svg class="ud"><use href="#ud"/></svg></button>
      <nav class="menus"><button>View</button><button>Search</button></nav>
      <span class="sel sel-scenes"><select aria-label="Display mode"><option>All Scenes</option></select><svg class="ud"><use href="#ud"/></svg></span>
      <button class="btn find" aria-label="Filter"><svg class="ic"><use href="#search"/></svg></button>
      <svg class="corner corner-tr"><use href="#grip"/></svg>
    </header>
    <section class="outliner">
      <ul class="rows">
        <li><span class="name"><svg class="exp"><use href="#expand"/></svg><svg class="ic"><use href="#meshO"/></svg><b>Bullet</b><i class="sep"></i><svg class="ic faint"><use href="#meshG"/></svg></span><span class="tg"><svg class="eye"><use href="#eye"/></svg></span><span class="tg"><svg class="cur"><use href="#cursor"/></svg></span><span class="tg"><svg class="ph off"><use href="#photo"/></svg></span></li>
        <li><span class="name"><svg class="exp"><use href="#collapse"/></svg><svg class="ic"><use href="#empty"/></svg><b>Center</b></span><span class="tg"><svg class="eye"><use href="#eye"/></svg></span><span class="tg"><svg class="cur"><use href="#cursor"/></svg></span><span class="tg"><svg class="ph"><use href="#photo"/></svg></span></li>
        <li><span class="name sub"><svg class="exp"><use href="#expand"/></svg><svg class="ic"><use href="#movie"/></svg><b>Camera</b><i class="sep"></i><svg class="ic big"><use href="#movieG"/></svg></span><span class="tg"><svg class="eye"><use href="#eye"/></svg></span><span class="tg"><svg class="cur"><use href="#cursor"/></svg></span><span class="tg"><svg class="ph"><use href="#photo"/></svg></span></li>
        <li><span class="name"><svg class="exp"><use href="#expand"/></svg><svg class="ic"><use href="#bulb"/></svg><b>Lamp.001</b><i class="sep"></i><svg class="ic"><use href="#sun"/></svg></span><span class="tg"><svg class="eye"><use href="#eye"/></svg></span><span class="tg"><svg class="cur"><use href="#cursor"/></svg></span><span class="tg"><svg class="ph"><use href="#photo"/></svg></span></li>
        <li><span class="name"><svg class="exp"><use href="#expand"/></svg><svg class="ic"><use href="#meshO"/></svg><b>PlaneCollision</b><i class="sep"></i><svg class="ic faint"><use href="#meshG"/></svg></span><span class="tg"><svg class="eye"><use href="#eyeOff"/></svg></span><span class="tg"><svg class="cur"><use href="#cursor"/></svg></span><span class="tg"><svg class="ph off"><use href="#photo"/></svg></span></li>
        <li><span class="name"><svg class="exp"><use href="#expand"/></svg><svg class="ic"><use href="#meshO"/></svg><b>PlaneDisplay</b><i class="sep"></i><svg class="ic faint"><use href="#meshG"/></svg></span><span class="tg"><svg class="eye"><use href="#eye"/></svg></span><span class="tg"><svg class="cur"><use href="#cursor"/></svg></span><span class="tg"><svg class="ph"><use href="#photo"/></svg></span></li>
        <li><span class="name"><svg class="exp"><use href="#collapse"/></svg><svg class="ic"><use href="#meshO"/></svg><b>Tank1</b></span><span class="tg"><svg class="eye"><use href="#eye"/></svg></span><span class="tg"><svg class="cur"><use href="#cursor"/></svg></span><span class="tg"><svg class="ph"><use href="#photo"/></svg></span></li>
        <li><span class="name data"><svg class="exp"><use href="#expand"/></svg><svg class="ic"><use href="#meshG"/></svg><b>Plane.001</b><i class="sep"></i><svg class="ic"><use href="#mat"/></svg><svg class="ic"><use href="#mat"/></svg></span><span class="tg"></span><span class="tg"></span><span class="tg"></span></li>
        <li><span class="name data"><svg class="exp"><use href="#expand"/></svg><svg class="ic"><use href="#wrench"/></svg><b>Modifiers</b><i class="sep"></i><svg class="ic"><use href="#bevel"/></svg></span><span class="tg"></span><span class="tg"></span><span class="tg"></span></li>
        <li><span class="name sub leaf"><svg class="ic halo"><use href="#empty"/></svg><b>Tank1Fire</b></span><span class="tg"><svg class="eye"><use href="#eye"/></svg></span><span class="tg"><svg class="cur"><use href="#cursor"/></svg></span><span class="tg"><svg class="ph"><use href="#photo"/></svg></span></li>
        <li><span class="name"><svg class="exp"><use href="#expand"/></svg><svg class="ic"><use href="#meshO"/></svg><b>Tank2</b><i class="sep"></i><svg class="ic faint"><use href="#meshG"/></svg><svg class="ic"><use href="#mat"/></svg><svg class="ic"><use href="#wrench"/></svg><svg class="ic faint"><use href="#empty"/></svg></span><span class="tg"><svg class="eye"><use href="#eye"/></svg></span><span class="tg"><svg class="cur"><use href="#cursor"/></svg></span><span class="tg"><svg class="ph"><use href="#photo"/></svg></span></li>
      </ul>
      <svg class="tree" viewBox="0 0 110 331" preserveAspectRatio="none"><path d="M35 0V312M49 19h12M49 48h16V76M78 78h12M49 108h12M49 137h12M49 167h12M49 196h16V286h25M49 315h12" stroke="#7c7c7c" fill="none"/></svg>
      <div class="vtrack"><div class="vthumb"></div></div>
      <svg class="corner corner-bl"><use href="#grip"/></svg>
    </section>
    <header class="bar bar-prop">
      <button class="btn pick" aria-label="Editor type"><svg class="ic"><use href="#props"/></svg><svg class="ud"><use href="#ud"/></svg></button>
      <div class="group tabs">
        <button class="btn dim" aria-label="Render"><svg class="ic"><use href="#photo"/></svg></button>
        <button class="btn dim" aria-label="Render layers"><svg class="ic"><use href="#layers"/></svg></button>
        <button class="btn dim" aria-label="Scene"><svg class="ic"><use href="#scene"/></svg></button>
        <button class="btn dim" aria-label="World"><svg class="ic"><use href="#world"/></svg></button>
        <button class="btn on" aria-label="Object"><svg class="ic"><use href="#cubeO"/></svg></button>
        <button class="btn dim" aria-label="Constraints"><svg class="ic"><use href="#chain"/></svg></button>
        <button class="btn dim" aria-label="Data"><svg class="ic"><use href="#emptyG"/></svg></button>
        <button class="btn dim" aria-label="Texture"><svg class="ic"><use href="#checker"/></svg></button>
        <button class="btn dim" aria-label="Physics"><svg class="ic"><use href="#physics"/></svg></button>
      </div>
      <svg class="corner corner-tr"><use href="#grip"/></svg>
    </header>
    <section class="props">
      <div class="panels">
        <section class="panel"><h3 class="closed">Relations Extras</h3></section>
        <section class="panel"><h3 class="closed">Motion Paths</h3></section>
        <section class="panel"><h3 class="closed">Custom Properties</h3></section>
        <section class="panel"><h3>Armory Props</h3>
          <label class="check lit"><input type="checkbox" checked>Export</label>
          <label class="check"><input type="checkbox">Advanced</label>
        </section>
        <section class="panel"><h3>Armory Traits</h3>
          <div class="traits">
            <div class="list">
              <label class="item"><input type="checkbox" checked><svg class="ic"><use href="#cubeO"/></svg><span>FireTree</span></label>
              <label class="item picked"><input type="checkbox" checked><svg class="ic"><use href="#cubeO"/></svg><span>Player1Fire</span></label>
              <div class="foot"><svg class="exp"><use href="#expand"/></svg><i class="handle"></i></div>
            </div>
            <div class="side">
              <div class="stack"><button class="btn" aria-label="Add trait"><svg class="ic"><use href="#plus"/></svg></button><button class="btn" aria-label="Remove trait"><svg class="ic"><use href="#minus"/></svg></button></div>
              <div class="stack"><button class="btn" aria-label="Move up"><svg class="ic" viewBox="0 0 22 22"><path d="m11 6 7 8H4z" fill="#eee" stroke="#111" stroke-width="1.500"/></svg></button><button class="btn" aria-label="Move down"><svg class="ic" viewBox="0 0 22 22"><path d="m11 16 7-8H4z" fill="#eee" stroke="#111" stroke-width="1.500"/></svg></button></div>
            </div>
          </div>
          <div class="prow"><label for="type">Type:</label><span class="sel"><select id="type"><option>Logic Nodes</option></select><svg class="ud"><use href="#ud"/></svg></span></div>
          <div class="prow"><label for="treename">Tree:</label><span class="treefield"><svg class="ic"><use href="#nodes"/></svg><input id="treename" value="Player1Fire"><button aria-label="Clear tree"><svg class="ic"><use href="#cross"/></svg></button></span></div>
        </section>
        <section class="panel last"><h3 class="closed">Armory Lod</h3></section>
      </div>
      <div class="vtrack"><div class="vthumb"></div></div>
      <svg class="corner corner-bl"><use href="#grip"/></svg>
    </section>
  </aside>
</main>
</body>
</html>
```

FILE: styles.css
```css
* { box-sizing: border-box; }
body {
  margin: 0;
  height: 100vh;
  display: flex;
  flex-direction: column;
  overflow: hidden;
  background: #101010;
  color: #c2c2c2;
  font: 16px/20px "DejaVu Sans", sans-serif;
}
button, input, select { font: inherit; color: inherit; }
button { padding: 0; border: 0; background: none; cursor: pointer; }
h2, h3, p, ul { margin: 0; padding: 0; font-weight: normal; }
.defs { position: absolute; width: 0; height: 0; }
.ic { width: 24px; height: 24px; flex: none; display: block; }
.ud { width: 10px; height: 20px; flex: none; }

/* editor header bars */
.bar {
  position: relative;
  display: flex;
  align-items: center;
  min-width: 0;
  overflow: hidden;
  background: #323232;
  white-space: nowrap;
}
.bar-top { height: 42px; flex: none; padding: 3px 0 0 13px; border-top: 2px solid #555; border-bottom: 3px solid #101010; }
.bar-3d { padding: 0 0 0 14px; background: #393939; border-top: 2px solid #565656; border-bottom: 2px solid #101010; }
.bar-node { padding: 1px 0 0 14px; border-top: 1px solid #505050; }
.bar-out { padding: 0 0 0 14px; border-top: 1px solid #505050; border-bottom: 1px solid #555; }
.bar-prop { padding: 2px 0 0 14px; border-bottom: 1px solid #505050; }
.menus { display: flex; gap: 1px; margin-left: 6px; margin-right: 6px; }
.menus button { padding: 2px 14px 0; }

.btn {
  display: inline-flex;
  align-items: center;
  justify-content: center;
  flex: none;
  width: 29px;
  height: 28px;
  background: #454545;
  box-shadow: inset 0 0 0 1px #383838;
}
.pick { width: 42px; justify-content: space-between; padding: 0 4px; border-radius: 6px; }
.pick.wide { width: 50px; padding: 0 6px; }
.lone { border-radius: 6px; margin-left: 8px; }
.btn.on { background: #b9803c; }
.dim .ic { opacity: .75; }
.btn.off { background: #363636; }
.group { display: flex; flex: none; border-radius: 6px; overflow: hidden; }
.group .btn { border-radius: 0; }
.field {
  width: 177px;
  height: 28px;
  padding: 2px 10px 0;
  border: 0;
  border-radius: 0;
  background: #7b838b;
  color: #0a0a0a;
}
.sel {
  display: flex;
  align-items: center;
  flex: none;
  height: 28px;
  padding-right: 4px;
  border-radius: 6px;
  background: #424242;
  box-shadow: inset 0 0 0 1px #363636;
}
.sel select {
  appearance: none;
  flex: 1;
  min-width: 0;
  height: 28px;
  padding: 2px 0 0 11px;
  border: 0;
  background: none;
  color: #b4b4b4;
}

.bar-top .group { margin-right: 11px; }
.bar-top .group .btn { width: 30px; }
.bar-top .group .pick { width: 46px; padding: 0 5px 0 7px; }
.sel-engine { width: 171px; margin-left: 12px; }
.logo { margin: 0 14px 0 30px; }
.status { flex: 1; min-width: 0; padding-top: 2px; overflow: hidden; color: #b4b4b4; }

.sel-mode { width: 172px; padding-left: 6px; }
.sel-mode select { padding-left: 5px; }
.bar-3d .group { margin-left: 9px; }
.bar-3d .group .sel { width: 110px; border-radius: 0; }
.lay {
  display: grid;
  grid-template-columns: repeat(5, 14px);
  grid-auto-rows: 13px;
  gap: 1px;
  flex: none;
  margin-left: 9px;
  border-radius: 5px;
  overflow: hidden;
}
.lay i { display: grid; place-items: center; background: #535353; }
.lay .active { background: #8a6136; }
.lay i::after { width: 6px; height: 6px; border-radius: 50%; }
.lay .active::after { content: ""; background: #ffb765; }
.lay .used::after { content: ""; background: #777; box-shadow: 0 0 0 1px #333; }
.play { width: 150px; justify-content: flex-start; gap: 8px; padding-left: 7px; margin-left: 8px; border-radius: 6px; }

.bar-node .group { margin-left: 9px; }
.bar-node .group + .group { margin-left: 11px; }
.bar-node .menus { margin-right: -4px; }
.bar-node .group .pick:first-child { width: 46px; padding: 0 5px 0 7px; }
.users { color: #999; }
.bar-node .users { width: 38px; }
.bar-node .fake { background: #7a6040; color: #111; }
.bar-node .auto { margin-left: 24px; }

/* workspace */
.work { flex: 1; min-height: 0; display: grid; grid-template-columns: minmax(0, 1fr) 435px; gap: 2px; }
.left { display: grid; grid-template-rows: minmax(0, 401fr) 42px minmax(0, 501fr) 38px; min-height: 0; min-width: 0; }
.right { display: grid; grid-template-rows: 39px 331px 40px minmax(0, 1fr); min-height: 0; min-width: 0; }

.view3d { position: relative; overflow: hidden; display: grid; }
.view3d > .scene, .overlay { grid-area: 1 / 1; width: 100%; height: 100%; min-height: 0; }
.overlay { position: relative; display: flex; flex-direction: column; justify-content: space-between; padding: 14px 29px 9px; color: #f2ecec; }
.objname { padding-left: 38px; }
.tab {
  position: absolute;
  width: 20px;
  height: 20px;
  border-radius: 0 4px 4px 0;
  background: rgba(60, 50, 50, .4);
  color: #aaa;
  font: bold 16px/20px "DejaVu Sans", sans-serif;
}
.tab-l { left: 0; top: 31px; }
.tab-r { right: 0; top: 31px; border-radius: 4px 0 0 4px; }
.corner { position: absolute; width: 16px; height: 16px; }
.corner-tr { right: 0; top: 0; }
.corner-bl { left: 0; bottom: 0; transform: rotate(180deg); }

/* node editor */
.nodes { position: relative; display: grid; grid-template-columns: minmax(0, 1fr) 24px; grid-template-rows: minmax(0, 1fr) 30px; background: #3a3a3a; }
.canvas {
  position: relative;
  overflow: hidden;
  background-color: #3b3b3b;
  background-image:
    linear-gradient(90deg, #202020 1px, transparent 1px),
    linear-gradient(#202020 1px, transparent 1px),
    linear-gradient(90deg, #2a2a2a 1px, transparent 1px, transparent 30px, #313131 30px, #313131 31px, transparent 31px, transparent 61px, #313131 61px, #313131 62px, transparent 62px, transparent 91px, #313131 91px, #313131 92px, transparent 92px, transparent 122px, #313131 122px, #313131 123px, transparent 123px),
    linear-gradient(#2a2a2a 1px, transparent 1px, transparent 30px, #313131 30px, #313131 31px, transparent 31px, transparent 61px, #313131 61px, #313131 62px, transparent 62px, transparent 91px, #313131 91px, #313131 92px, transparent 92px, transparent 122px, #313131 122px, #313131 123px, transparent 123px);
  background-size: 1520px 100%, 100% 1520px, 152px 152px, 152px 152px;
  background-position: 806px 0, 0 169px, 46px 0, 0 17px;
}
.links { position: absolute; inset: 0; width: 100%; height: 100%; }
.node {
  position: absolute;
  width: 213px;
  border-radius: 12px;
  background: rgba(98, 98, 98, .88);
  box-shadow: 0 0 0 1px #1c1c1c, 0 2px 5px 1px rgba(0, 0, 0, .6);
  color: #e4e4e4;
}
.n-key { left: 409px; top: 60px; }
.n-pad { left: 409px; top: 229px; }
.n-merge { left: 671px; top: 61px; }
.n-send { left: 925px; top: 62px; }
.node h2 {
  display: flex;
  align-items: center;
  gap: 11px;
  height: 31px;
  padding: 5px 0 0 8px;
  border-radius: 12px 12px 0 0;
  background: #9e6410;
  font-size: 16px;
}
.node h2::before { content: ""; width: 15px; height: 14px; margin-bottom: 2px; background: #d6a469; clip-path: polygon(0 0, 100% 0, 50% 100%); }
.nbody { display: flex; flex-direction: column; gap: 4px; padding: 8px 15px; }
.out, .in { height: 34px; line-height: 36px; padding: 0 16px 0 12px; }
.out { text-align: right; }
.node .sel { height: 30px; }
.num {
  display: flex;
  align-items: center;
  justify-content: space-between;
  height: 30px;
  margin-top: 4px;
  padding: 0 9px;
  border-radius: 15px;
  background: #434343;
  box-shadow: inset 0 0 0 1px #383838;
  color: #b4b4b4;
}
.num::before, .num::after { content: ""; width: 7px; height: 10px; background: #777; clip-path: polygon(0 50%, 100% 0, 100% 100%); }
.num::after { clip-path: polygon(0 0, 100% 50%, 0 100%); }
.num span { margin-left: 9px; padding-top: 3px; }
.num input { flex: 1; width: 20px; padding: 3px 8px 0 0; border: 0; background: none; text-align: right; }
.new .btn { height: 30px; width: 31px; background: #434343; }
.new .grow { flex: 1; justify-content: flex-start; padding-left: 9px; color: #b4b4b4; }
.new span { flex: 1; text-align: center; padding: 3px 8px 0 0; }
.add { width: 20px; height: 20px; }
.n-merge .nbody { gap: 0; padding-bottom: 3px; }
.new { margin: 5px 0 8px; }
.n-merge .in { height: 33px; }
.n-send .nbody { gap: 0; padding-bottom: 7px; }
.in.short { height: 28px; line-height: 28px; }
.event { display: flex; align-items: center; gap: 13px; margin-top: 4px; }
.event span { padding-top: 3px; }
.event .field { width: 90px; border-radius: 6px; box-shadow: inset 0 0 0 1px #4a4a4a; }
.sock { position: absolute; width: 16px; height: 16px; border-radius: 50%; background: #d05050; border: 1px solid #1e1e1e; }
.s-out { right: -8px; top: 46px; }
.s-in0, .s-in1, .s-in, .s-event, .s-pad { left: -8px; }
.s-in0 { top: 122px; }
.s-in1 { top: 155px; }
.s-in { top: 76px; }
.s-event { top: 109px; background: #fff; }
.s-pad { top: 155px; background: #158c2a; }

.nodes .vtrack { padding: 6px 9px 0 0; }
.nodes .vthumb { height: 100%; }
.nodes .tab-r, .nodes .tab-l { background: #2c2c2c; }
.vtrack { display: flex; flex-direction: column; }
.vthumb { border-radius: 10px; background: #4c4c4c; box-shadow: inset 0 0 0 1px #333; }
.htrack { height: 20px; margin: 4px 9px 6px 7px; border-radius: 10px; background: linear-gradient(#474747, #525252); box-shadow: inset 0 0 0 1px #303030; }

/* outliner */
.bar-out .menus { margin-right: 5px; }
.sel-scenes { width: 185px; }
.find { margin-left: 9px; border-radius: 6px 0 0 6px; background: #6b7683; }
.outliner { position: relative; display: grid; grid-template-columns: minmax(0, 1fr) 25px; background: #4b4b4b; border-bottom: 1px solid #101010; }
.rows { display: grid; grid-auto-rows: minmax(0, 1fr); list-style: none; padding-top: 3px; }
.rows li { display: grid; grid-template-columns: minmax(0, 1fr) 30px 30px 29px; background: #505050; margin-right: -25px; padding-right: 25px; }
.rows li:nth-child(odd) { background: #4a4a4a; }
.name { display: flex; align-items: center; padding-left: 34px; }
.name b { font-weight: normal; margin-left: 5px; padding-top: 3px; color: #cacaca; }
.name .exp { margin-right: 13px; }
.exp { width: 14px; height: 14px; flex: none; }
.name.sub { padding-left: 64px; }
.name.data { padding-left: 71px; }
.name.data .exp { margin-right: 6px; }
.name.leaf { padding-left: 91px; }
.leaf b { color: #fff; }
.halo { background: #8c7355; border-radius: 50%; box-shadow: 0 0 0 2px #8c7355; }
.sep { width: 3px; height: 18px; margin: 0 12px 0 14px; background: #2a2a2a; }
.sep ~ .ic { margin-right: 6px; }
.faint { opacity: .7; }
.big { transform: scale(1.15); }
.tg { display: grid; place-items: center; border-left: 1px solid #3a3a3a; }
.eye { width: 20px; height: 15px; }
.cur { width: 13px; height: 21px; }
.ph { width: 21px; height: 21px; }
.ph.off { opacity: .3; }
.tree { position: absolute; left: 0; top: 0; width: 110px; height: 100%; }
.outliner .vtrack { position: relative; margin: 7px 6px 7px 0; border-radius: 10px; box-shadow: inset 0 0 0 1px #3a3a3a; justify-content: flex-end; }
.outliner .vthumb { height: 140px; background: #4d4d4d; }

/* properties */
.tabs { margin-left: 12px; }
.tabs .btn { width: 30px; }
.props { position: relative; display: grid; grid-template-columns: minmax(0, 1fr) 25px; background: #393939; }
.panels { padding: 0 5px 0 4px; display: flex; flex-direction: column; min-width: 0; }
.panel { border-bottom: 1px solid #606060; padding: 0 9px 0 10px; }
.panel.last { border: 0; }
.panel h3 {
  display: flex;
  align-items: center;
  height: 32px;
  gap: 8px;
  padding-top: 2px;
  font-size: 17px;
  color: #959595;
}
.panel:first-child h3 { height: 28px; padding-bottom: 4px; }
.panel h3::before { content: ""; width: 11px; height: 11px; margin-bottom: 3px; background: #7a7a7a; clip-path: polygon(0 0, 100% 0, 50% 100%); }
.panel h3.closed::before { clip-path: polygon(0 0, 100% 50%, 0 100%); }
.panel h3::after { content: ""; width: 12px; height: 6px; margin-left: auto; background: radial-gradient(circle at 1px 1px, #c0c0c0 1px, transparent 1px) 0 0 / 3px 3px; }
.check { display: flex; align-items: center; gap: 12px; height: 38px; padding-left: 3px; color: #bababa; }
.check.lit { color: #fff; margin-top: 7px; }
.check + .check { margin-bottom: 6px; }
input[type="checkbox"] {
  appearance: none;
  position: relative;
  flex: none;
  width: 19px;
  height: 19px;
  margin: 0;
  border-radius: 5px;
  background: #4b4b4b;
  box-shadow: 0 0 0 1px #303030;
}
input[type="checkbox"]:checked { background: #b5793a; }
input[type="checkbox"]:checked::before {
  content: "";
  position: absolute;
  left: 7px;
  top: -3px;
  width: 8px;
  height: 16px;
  border: solid #e8e8e8;
  border-width: 0 2px 2px 0;
  transform: rotate(40deg);
}
.traits { display: flex; gap: 12px; margin: 12px 0 10px -2px; }
.list { flex: 1; display: flex; flex-direction: column; height: 151px; padding: 13px 8px 8px; border-radius: 5px; background: #464646; box-shadow: inset 0 0 0 1px #2e2e2e; }
.item { display: flex; align-items: center; height: 27px; margin-bottom: 2px; padding-left: 4px; border-radius: 5px; color: #d2d2d2; }
.item span { padding-top: 3px; }
.item .ic { width: 21px; height: 21px; margin: 0 6px 0 24px; }
.item.picked { background: #745a3c; color: #fff; }
.foot { display: flex; align-items: center; margin-top: auto; padding-left: 6px; }
.foot .exp { opacity: .6; }
.handle { width: 22px; height: 6px; margin-left: 146px; border: solid #aaa; border-width: 2px 0; }
.side { display: flex; flex-direction: column; gap: 10px; }
.stack { display: flex; flex-direction: column; height: 58px; border-radius: 6px; overflow: hidden; }
.stack .btn { flex: 1; width: 28px; }
.prow { display: grid; grid-template-columns: 126px minmax(0, 1fr); align-items: center; height: 28px; margin: 0 0 9px -2px; padding-left: 10px; color: #bababa; }
.prow label { padding-top: 2px; }
.prow:last-child { margin-bottom: 12px; }
.treefield { display: flex; align-items: center; height: 28px; padding: 0 2px 0 4px; border-radius: 5px; background: #7b838b; color: #0a0a0a; }
.treefield input { flex: 1; min-width: 0; padding: 2px 0 0 6px; border: 0; background: none; }
.props .vtrack { margin: 7px 6px 6px 0; border-radius: 10px; box-shadow: inset 0 0 0 1px #333; justify-content: flex-end; }
.props .vthumb { height: 38%; }
```
